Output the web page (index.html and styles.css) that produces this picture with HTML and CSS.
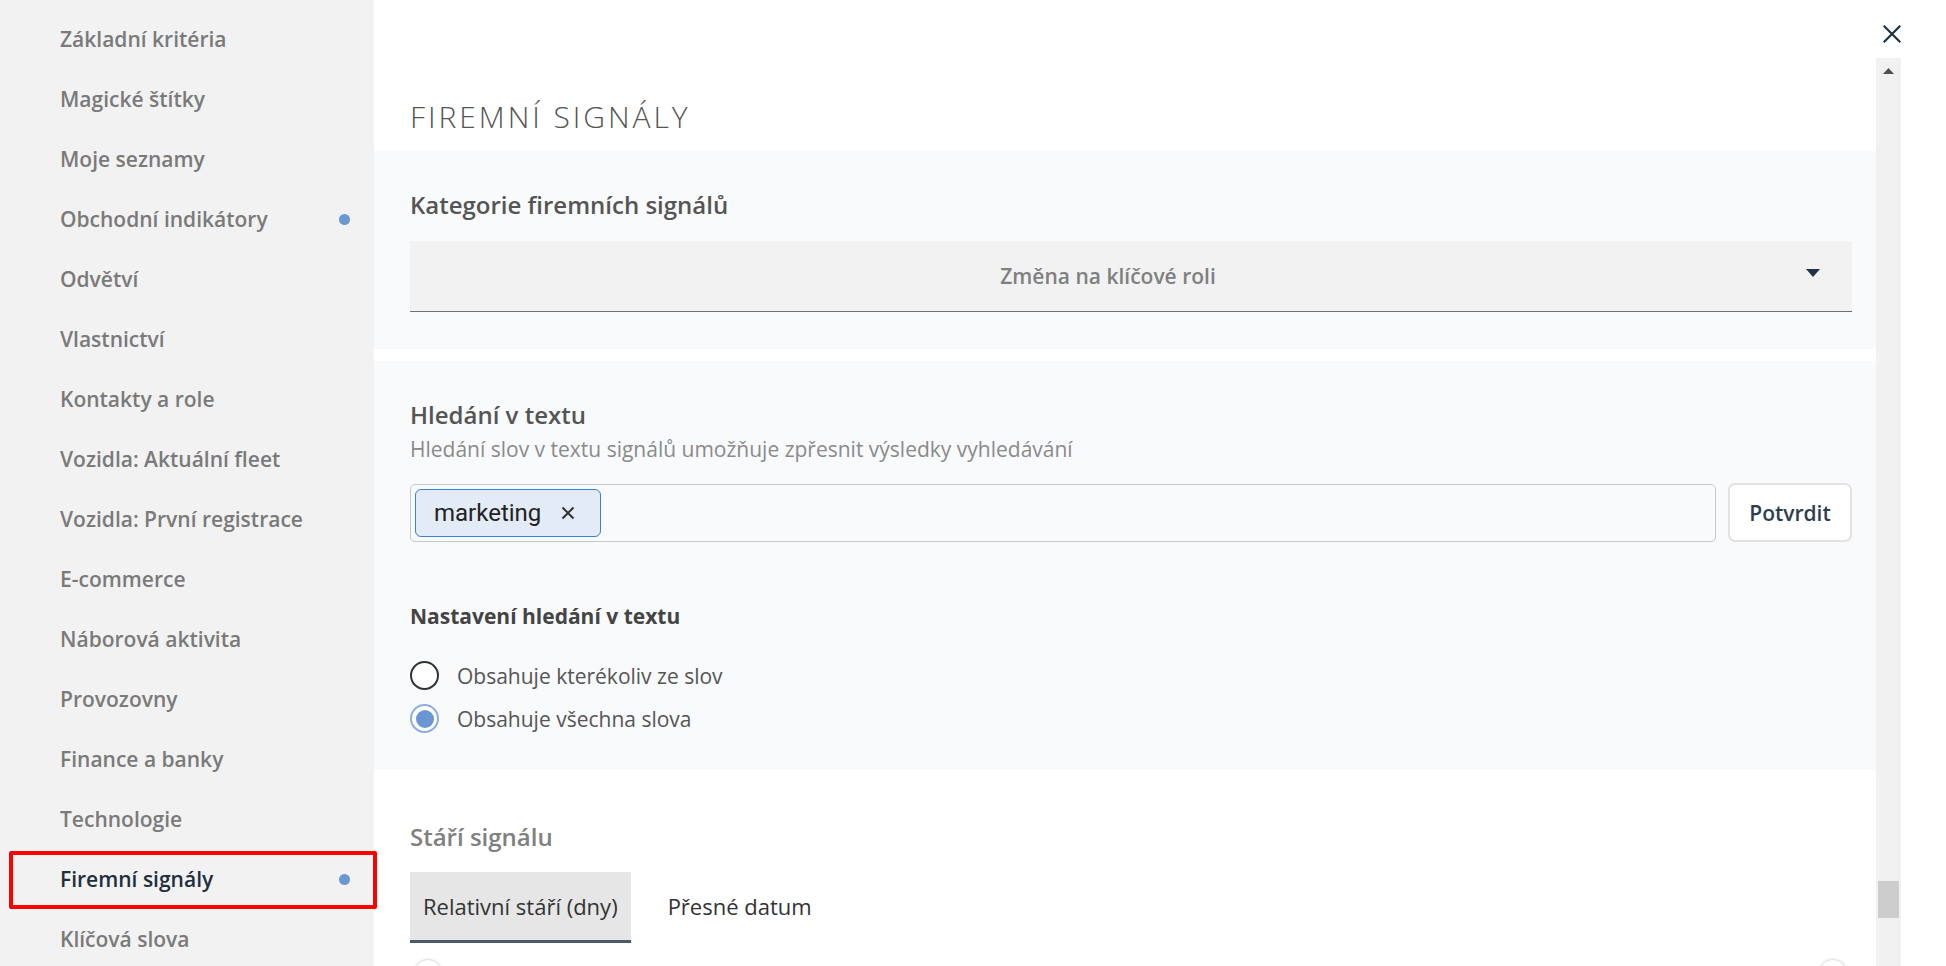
FILE: index.html
```html
<!DOCTYPE html>
<html lang="cs">
<head>
<meta charset="utf-8">
<title>Firemní signály</title>
<link rel="stylesheet" href="styles.css">
</head>
<body>
<div class="layout">
  <nav class="sidebar">
    <div class="nav-item">Základní kritéria</div>
    <div class="nav-item">Magické štítky</div>
    <div class="nav-item">Moje seznamy</div>
    <div class="nav-item">Obchodní indikátory<span class="dot"></span></div>
    <div class="nav-item">Odvětví</div>
    <div class="nav-item">Vlastnictví</div>
    <div class="nav-item">Kontakty a role</div>
    <div class="nav-item">Vozidla: Aktuální fleet</div>
    <div class="nav-item">Vozidla: První registrace</div>
    <div class="nav-item">E-commerce</div>
    <div class="nav-item">Náborová aktivita</div>
    <div class="nav-item">Provozovny</div>
    <div class="nav-item">Finance a banky</div>
    <div class="nav-item">Technologie</div>
    <div class="nav-item active">Firemní signály<span class="dot"></span></div>
    <div class="nav-item">Klíčová slova</div>
  </nav>
  <main class="main">
    <div class="topbar">
      <svg class="close" viewBox="0 0 18 18" width="18" height="18"><path d="M1.5 1.5L16.5 16.5M16.5 1.5L1.5 16.5" stroke="#1e3446" stroke-width="2.2" stroke-linecap="square" fill="none"/></svg>
    </div>
    <div class="scroll-wrap">
      <div class="content">
        <h1 class="page-title">FIREMNÍ SIGNÁLY</h1>

        <section class="panel panel-first">
          <h2 class="panel-heading">Kategorie firemních signálů</h2>
          <div class="select">
            <span class="select-value">Změna na klíčové roli</span>
            <svg class="select-arrow" viewBox="0 0 14 8" width="14" height="8"><path d="M0 0H14L7 8Z" fill="#1e3446"/></svg>
          </div>
        </section>

        <section class="panel panel-second">
          <h2 class="panel-heading">Hledání v textu</h2>
          <p class="panel-sub">Hledání slov v textu signálů umožňuje zpřesnit výsledky vyhledávání</p>
          <div class="input-row">
            <div class="tag-input">
              <span class="chip">marketing<svg class="chip-x" viewBox="0 0 14 14" width="14" height="14"><path d="M1.5 1.5L12.5 12.5M12.5 1.5L1.5 12.5" stroke="#333" stroke-width="2" fill="none"/></svg></span>
            </div>
            <button class="btn">Potvrdit</button>
          </div>
          <h3 class="sub-heading">Nastavení hledání v textu</h3>
          <div class="radios">
            <div class="radio-row"><span class="radio"></span><span class="radio-label">Obsahuje kterékoliv ze slov</span></div>
            <div class="radio-row"><span class="radio checked"></span><span class="radio-label">Obsahuje všechna slova</span></div>
          </div>
        </section>

        <section class="age">
          <h2 class="age-heading">Stáří signálu</h2>
          <div class="tabs">
            <div class="tab active">Relativní stáří (dny)</div>
            <div class="tab">Přesné datum</div>
          </div>
          <div class="slider">
            <span class="handle"></span>
            <span class="handle"></span>
          </div>
        </section>
      </div>
      <div class="scrollbar">
        <svg class="sb-arrow" viewBox="0 0 11 6" width="11" height="6"><path d="M0 6H11L5.5 0Z" fill="#505050"/></svg>
        <span class="sb-thumb"></span>
      </div>
    </div>
  </main>
</div>
</body>
</html>
```

FILE: styles.css
```css
* { box-sizing: border-box; margin: 0; padding: 0; }
html, body { height: 100%; }
body {
  font-family: "Open Sans", "Liberation Sans", sans-serif;
  background: #fff;
  overflow: hidden;
}
.layout { display: flex; height: 966px; }

/* Sidebar */
.sidebar {
  width: 374px;
  flex: none;
  background: #f2f2f2;
  padding-top: 9px;
  position: relative;
  z-index: 2;
}
.nav-item {
  position: relative;
  display: flex;
  align-items: center;
  justify-content: space-between;
  height: 60px;
  padding: 0 24px 0 60px;
  font-size: 21px;
  font-weight: 600;
  color: #7a7a7a;
  white-space: nowrap;
}
.nav-item.active { color: #1f2f3f; }
.nav-item.active::after {
  content: "";
  position: absolute;
  top: 2px;
  bottom: 0;
  left: 9px;
  right: -3px;
  border: 4px solid #ff0000;
  border-radius: 2px;
}
.dot {
  width: 11px;
  height: 11px;
  border-radius: 50%;
  background: #6b97d2;
}

/* Main */
.main {
  flex: 1;
  min-width: 0;
  display: flex;
  flex-direction: column;
  padding-right: 45px;
}
.topbar {
  height: 58px;
  flex: none;
  display: flex;
  justify-content: flex-end;
  padding-top: 25px;
}
.close { display: block; }
.scroll-wrap {
  flex: 1;
  min-height: 0;
  display: flex;
  overflow: hidden;
}
.content {
  flex: 1;
  min-width: 0;
  padding-top: 39px;
}
.page-title {
  font-size: 30px;
  font-weight: 300;
  letter-spacing: 2.95px;
  line-height: 40px;
  color: #555;
  padding-left: 36px;
}
.panel {
  background: #f9fafb;
  padding: 39px 24px 37px 36px;
}
.panel-first { margin-top: 14px; }
.panel-second { margin-top: 12px; padding-top: 39px; padding-bottom: 30px; }
.panel-heading {
  font-size: 24px;
  font-weight: 600;
  line-height: 30px;
  color: #555;
}
.select {
  margin-top: 21px;
  height: 71px;
  background: #f2f2f2;
  border-bottom: 1px solid #707070;
  display: flex;
  align-items: center;
  padding-right: 32px;
}
.select-value {
  flex: 1;
  text-align: center;
  font-size: 21px;
  font-weight: 600;
  line-height: 28px;
  color: #808080;
}
.select-arrow { display: block; margin-bottom: 6px; }

.panel-sub {
  margin-top: 5px;
  font-size: 21px;
  line-height: 28px;
  color: #8a8a8a;
}
.input-row {
  margin-top: 20px;
  display: flex;
  align-items: flex-end;
  gap: 12px;
}
.tag-input {
  flex: 1;
  height: 58px;
  border: 1px solid #c8c8c8;
  border-radius: 5px;
  padding: 4px;
  display: flex;
  align-items: center;
}
.chip {
  height: 48px;
  display: flex;
  align-items: center;
  gap: 20px;
  padding: 0 25px 0 18px;
  background: #e3ebf6;
  border: 1px solid #3d7fd2;
  border-radius: 6px;
  font-family: Roboto, "Liberation Sans", sans-serif;
  font-size: 24px;
  color: #222;
}
.chip-x { display: block; }
.btn {
  width: 124px;
  height: 59px;
  background: #fff;
  border: 2px solid #e2e2e2;
  border-radius: 7px;
  font-family: "Open Sans", sans-serif;
  font-size: 21px;
  font-weight: 600;
  color: #2c3e50;
}
.sub-heading {
  margin-top: 60px;
  font-size: 21px;
  font-weight: 700;
  line-height: 28px;
  color: #444;
}
.radios { margin-top: 24px; }
.radio-row {
  height: 43px;
  display: flex;
  align-items: center;
  gap: 18px;
}
.radio {
  width: 29px;
  height: 29px;
  border-radius: 50%;
  border: 2px solid #333;
  background: #fff;
  display: flex;
  align-items: center;
  justify-content: center;
}
.radio.checked { border-color: #8caee0; }
.radio.checked::before {
  content: "";
  width: 18px;
  height: 18px;
  border-radius: 50%;
  background: #6a96d2;
}
.radio-label {
  font-size: 21px;
  line-height: 28px;
  color: #555;
}

.age { padding: 52px 24px 0 36px; }
.age-heading {
  font-size: 24px;
  font-weight: 600;
  line-height: 30px;
  color: #808080;
}
.tabs {
  margin-top: 20px;
  display: flex;
  gap: 24px;
}
.tab {
  height: 71px;
  padding: 0 13px;
  display: flex;
  align-items: center;
  font-size: 22px;
  color: #333;
  border-bottom: 3px solid transparent;
}
.tab.active {
  background: #e6e6e6;
  border-bottom-color: #4b5b6b;
}
.slider {
  margin-top: 16px;
  display: flex;
  justify-content: space-between;
  padding: 0 5px 0 4px;
}
.handle {
  width: 28px;
  height: 28px;
  border-radius: 50%;
  background: #fff;
  border: 1px solid #e2e2e2;
  box-shadow: 0 0 3px rgba(0,0,0,0.12);
}

/* Fake scrollbar */
.scrollbar {
  width: 25px;
  flex: none;
  background: #f1f1f1;
  display: flex;
  flex-direction: column;
  align-items: center;
}
.sb-arrow { display: block; margin-top: 10px; }
.sb-thumb {
  margin-top: 807px;
  width: 21px;
  height: 37px;
  background: #cdcdcd;
}
```
